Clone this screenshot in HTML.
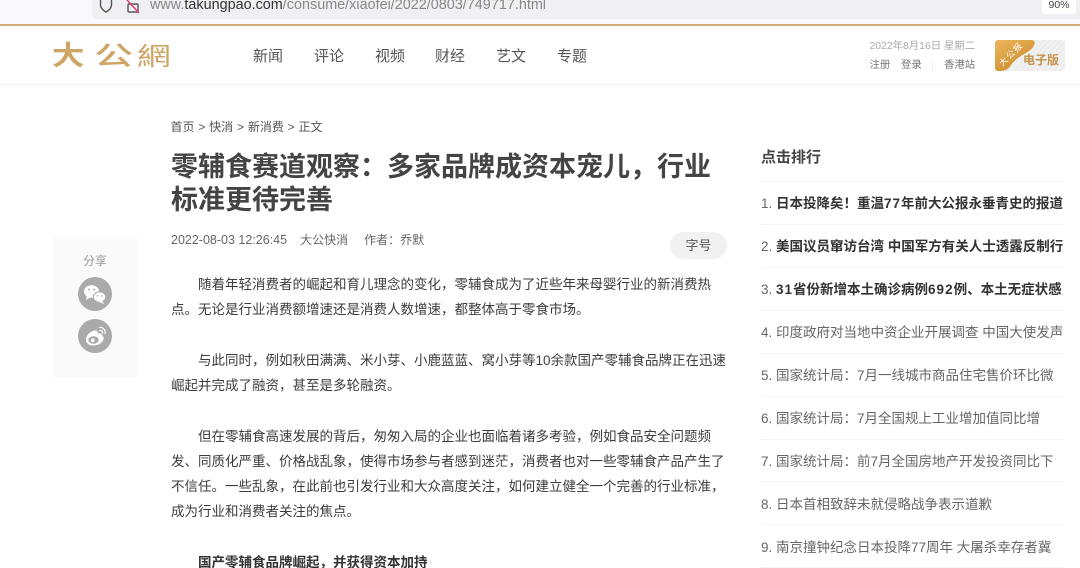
<!DOCTYPE html>
<html lang="zh"><head><meta charset="utf-8"><title>零辅食赛道观察</title>
<style>
html,body{margin:0;padding:0;background:#fff}
body{width:1080px;height:568px;overflow:hidden;position:relative;font-family:"Liberation Sans","Noto Sans CJK SC",sans-serif;color:#444}
#w{position:absolute;left:0;top:0;width:1080px;height:568px;overflow:hidden;filter:blur(.3px)}
.a{position:absolute;white-space:nowrap}
.nav{top:46px;font-size:15px;line-height:22px;color:#555}
.p{left:171px;font-size:13.5px;line-height:25.3px;color:#3c3c3c}
.h{left:761px;width:303px;height:1px;background:#f4f4f4}
.r{left:761px;font-size:13.5px;line-height:20px;color:#666}
.r b{color:#333}
.r i{font-style:normal;letter-spacing:1px}
</style></head><body><div id="w">
<div class="a" style="left:0;top:0;width:1080px;height:24px;background:#f9f9fb"></div>
<div class="a" style="left:92px;top:0;width:988px;height:19px;background:#f0f0f4;border-radius:0 0 0 4px"></div>
<svg class="a" style="left:98px;top:0" width="50" height="14" viewBox="0 0 50 14"><path d="M2.500 0V5C2.500 8 4.500 10 8 12C11.500 10 13.500 8 13.500 5V0" fill="none" stroke="#555" stroke-width="1.400"/><rect x="30" y="4" width="10" height="8" rx="1" fill="none" stroke="#555" stroke-width="1.400"/><path d="M29 0L41 13" stroke="#e2406c" stroke-width="1.500"/></svg>
<div class="a" style="left:150px;top:-3px;font-size:14.400px;line-height:16px;color:#888">www.<span style="color:#333">takungpao.com</span>/consume/xiaofei/2022/0803/749717.html</div>
<div class="a" style="left:1042px;top:0;width:34px;height:14px;background:#fff;border-radius:0 0 3px 3px;font-size:10.500px;line-height:11px;text-align:center;color:#444">90%</div>
<div class="a" style="left:0;top:24px;width:1080px;height:2px;background:#cfae7b"></div>
<div class="a" style="left:0;top:83px;width:1080px;height:5px;background:linear-gradient(#f5f5f5,#fff)"></div>

<div class="a" style="left:52px;top:37px;width:122px;height:34px;color:#cfa565;font-family:'Noto Sans CJK SC',sans-serif">
<span class="a" style="left:0;top:0;font-size:27px;line-height:34px;font-weight:700;transform:scaleX(1.200);transform-origin:0 50%">大</span>
<span class="a" style="left:42px;top:1px;font-size:26px;line-height:34px;font-weight:500;transform:scaleX(1.500);transform-origin:0 50%">公</span>
<span class="a" style="left:85px;top:1px;font-size:25px;line-height:34px;font-weight:400;transform:scaleX(1.350);transform-origin:0 50%">網</span>
</div>

<div class="a nav" style="left:253px">新闻</div><div class="a nav" style="left:314px">评论</div><div class="a nav" style="left:375px">视频</div><div class="a nav" style="left:435px">财经</div><div class="a nav" style="left:496px">艺文</div><div class="a nav" style="left:557px">专题</div>

<div class="a" style="left:869.500px;top:39.500px;font-size:10.400px;line-height:14px;color:#aaa">2022年8月16日 星期二</div>
<div class="a" style="left:869.500px;top:59px;font-size:10.400px;line-height:14px;color:#777">注册</div>
<div class="a" style="left:901px;top:59px;font-size:10.400px;line-height:14px;color:#777">登录</div>
<div class="a" style="left:932px;top:60px;width:1px;height:11px;background:#eee"></div>
<div class="a" style="left:944px;top:59px;font-size:10.400px;line-height:14px;color:#777">香港站</div>

<div class="a" style="left:995px;top:40px;width:70px;height:31px;border-radius:3px;overflow:hidden;background:repeating-linear-gradient(135deg,#f2f2f2 0 2px,#ececec 2px 4px)">
<svg class="a" style="left:0;top:0" width="70" height="31" viewBox="0 0 70 31"><defs><linearGradient id="g" x1="0" y1="0" x2="0.700" y2="1"><stop offset="0" stop-color="#edb75e"/><stop offset="1" stop-color="#c98a2b"/></linearGradient></defs><path d="M0 0H36C42 0 40 7 34 11C26 16 20 19 16 25C14 29 10 31 5 31H0Z" fill="url(#g)"/></svg>
<span class="a" style="left:1px;top:8px;font-size:8.500px;line-height:12px;color:#fff;transform:rotate(-45deg);letter-spacing:1.500px">大公报</span>
<span class="a" style="left:28px;top:12px;font-size:12px;line-height:16px;font-weight:700;color:#c69149">电子版</span>
</div>

<div class="a" style="left:53px;top:236px;width:84px;height:142px;background:#fafafa"></div>
<div class="a" style="left:53px;top:254px;width:84px;text-align:center;font-size:11.700px;line-height:16px;color:#999">分享</div>
<svg class="a" style="left:78px;top:277px" width="34" height="76" viewBox="0 0 34 76">
<circle cx="17" cy="17" r="17" fill="#aaa"/><circle cx="17" cy="59" r="17" fill="#aaa"/>
<ellipse cx="13.500" cy="14.500" rx="7.500" ry="6.300" fill="#fff"/><path d="M9 18.500L8 23L13 20Z" fill="#fff"/>
<ellipse cx="21.500" cy="20" rx="6.200" ry="5.200" fill="#fff" stroke="#aaa" stroke-width="1"/><path d="M24 23.500L26 27L21 25Z" fill="#fff"/>
<circle cx="11" cy="12.500" r="1" fill="#aaa"/><circle cx="16" cy="12.500" r="1" fill="#aaa"/><circle cx="19.500" cy="18.800" r=".8" fill="#aaa"/><circle cx="23.500" cy="18.800" r=".8" fill="#aaa"/>
<path d="M8 62.500C8 58 13 54 17 53.500C19.500 53.300 20 55 19.500 56.500C22 56 24.500 56.500 24.500 59C26 60 26 62 25 63.500C23 67 19 68.500 15 68.500C11 68.500 8 66.500 8 62.500Z" fill="#fff"/>
<ellipse cx="15.500" cy="63" rx="5.200" ry="3.800" fill="#aaa"/><circle cx="14.800" cy="63.200" r="1.800" fill="#fff"/>
<path d="M21 50.500C25 49.500 28 53 27 57M21.500 53.500C23.500 53 25 54.500 24.500 56.500" fill="none" stroke="#fff" stroke-width="1.200"/>
</svg>

<div class="a" style="left:170.500px;top:119px;font-size:12px;line-height:16px;color:#555;word-spacing:.5px">首页 &gt; 快消 &gt; 新消费 &gt; 正文</div>
<div class="a" style="left:171px;top:150.500px;font-size:27px;line-height:33px;font-weight:700;color:#444">零辅食赛道观察：多家品牌成资本宠儿，行业<br>标准更待完善</div>
<div class="a" style="left:171px;top:232px;font-size:12px;line-height:16px;color:#666"><span style="font-size:12.500px">2022-08-03 12:26:45</span><span style="margin-left:13px">大公快消</span><span style="margin-left:16px">作者：乔默</span></div>
<div class="a" style="left:670px;top:232px;width:57px;height:27px;border-radius:14px;background:#f1f1f1;text-align:center;font-size:13px;line-height:27px;color:#555">字号</div>

<div class="a p" style="left:198px;top:271.500px">随着年轻消费者的崛起和育儿理念的变化，零辅食成为了近些年来母婴行业的新消费热</div>
<div class="a p" style="top:297px">点。无论是行业消费额增速还是消费人数增速，都整体高于零食市场。</div>
<div class="a p" style="left:198px;top:347.500px">与此同时，例如秋田满满、米小芽、小鹿蓝蓝、窝小芽等10余款国产零辅食品牌正在迅速</div>
<div class="a p" style="top:373px">崛起并完成了融资，甚至是多轮融资。</div>
<div class="a p" style="left:198px;top:423.500px">但在零辅食高速发展的背后，匆匆入局的企业也面临着诸多考验，例如食品安全问题频</div>
<div class="a p" style="top:449px">发、同质化严重、价格战乱象，使得市场参与者感到迷茫，消费者也对一些零辅食产品产生了</div>
<div class="a p" style="top:474px">不信任。一些乱象，在此前也引发行业和大众高度关注，如何建立健全一个完善的行业标准，</div>
<div class="a p" style="top:499px">成为行业和消费者关注的焦点。</div>
<div class="a p" style="left:198px;top:549.500px;font-weight:700;color:#333">国产零辅食品牌崛起，并获得资本加持</div>

<div class="a" style="left:761px;top:147px;font-size:15px;line-height:22px;font-weight:700;color:#444">点击排行</div>
<div class="a h" style="top:181px"></div><div class="a h" style="top:224px"></div><div class="a h" style="top:267px"></div><div class="a h" style="top:310px"></div><div class="a h" style="top:353px"></div><div class="a h" style="top:396px"></div><div class="a h" style="top:439px"></div><div class="a h" style="top:481px"></div><div class="a h" style="top:524px"></div><div class="a h" style="top:567px"></div>
<div class="a r" style="top:194px">1. <b>日本投降矣！重温<i>77</i>年前大公报永垂青史的报道</b></div>
<div class="a r" style="top:237px">2. <b>美国议员窜访台湾 中国军方有关人士透露反制行</b></div>
<div class="a r" style="top:280px">3. <b><i>31</i>省份新增本土确诊病例<i>692</i>例、本土无症状感</b></div>
<div class="a r" style="top:323px">4. 印度政府对当地中资企业开展调查 中国大使发声</div>
<div class="a r" style="top:366px">5. 国家统计局：7月一线城市商品住宅售价环比微</div>
<div class="a r" style="top:409px">6. 国家统计局：7月全国规上工业增加值同比增</div>
<div class="a r" style="top:452px">7. 国家统计局：前7月全国房地产开发投资同比下</div>
<div class="a r" style="top:495px">8. 日本首相致辞未就侵略战争表示道歉</div>
<div class="a r" style="top:538px">9. 南京撞钟纪念日本投降77周年 大屠杀幸存者冀</div>
</div></body></html>
